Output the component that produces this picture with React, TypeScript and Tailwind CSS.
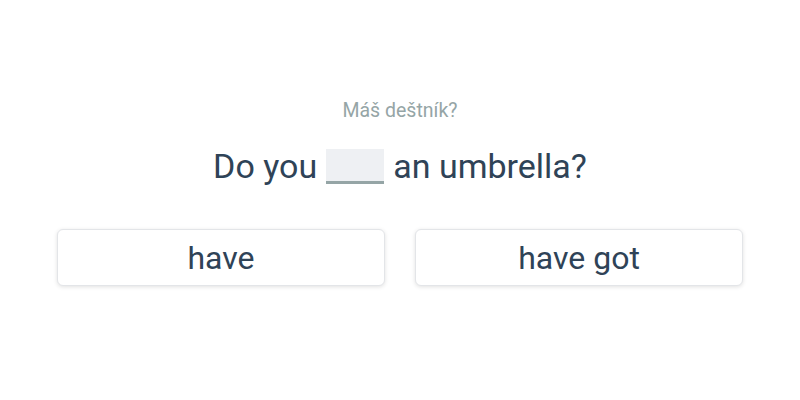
import React from "react";

const options = ["have", "have got"];

export default function App() {
  return (
    <div
      className="w-[800px] h-[400px] bg-white flex flex-col items-center"
      style={{ fontFamily: "Roboto, 'Liberation Sans', sans-serif" }}
    >
      <p className="mt-[99px] text-[19.5px] leading-[24px] text-[#95a5a6]">
        Máš deštník?
      </p>
      <h1 className="mt-[25px] flex items-center text-[34px] leading-[36px] text-[#2f4357]">
        <span>Do you</span>
        <span className="mx-[9px] inline-block w-[58px] h-[35px] bg-[#eef0f3] border-b-[3px] border-[#95a5a6]" />
        <span>an umbrella?</span>
      </h1>
      <div className="mt-[45px] w-full px-[57px] grid grid-cols-2 gap-[30px]">
        {options.map((opt) => (
          <button
            key={opt}
            className="h-[57px] rounded-[6px] border border-[#e3e5e8] bg-white shadow-[0_1px_4px_rgba(0,0,0,0.12)] text-[32px] text-[#2f4357]"
          >
            {opt}
          </button>
        ))}
      </div>
    </div>
  );
}
